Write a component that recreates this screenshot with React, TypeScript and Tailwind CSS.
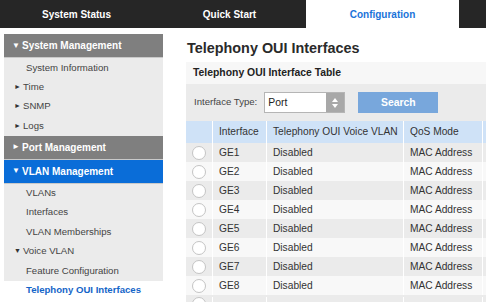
const tabs = ["System Status", "Quick Start", "Configuration"];

const rows = ["GE1", "GE2", "GE3", "GE4", "GE5", "GE6", "GE7", "GE8"];

function NavHeader({ label, open, active }: { label: string; open?: boolean; active?: boolean }) {
  return (
    <div
      className={`flex h-[24px] items-center border-b border-[#c9c9c9] pl-[8px] text-[10px] font-bold text-white ${
        active ? "bg-[#0a6dd8]" : "bg-[#7f7f7f]"
      }`}
    >
      <span className="mr-[3px] w-[7px] text-[8px]">{open ? "▼" : "►"}</span>
      {label}
    </div>
  );
}

function NavItem({ label, arrow, open, current }: { label: string; arrow?: boolean; open?: boolean; current?: boolean }) {
  return (
    <div
      className={`flex h-[19.4px] items-center text-[9.6px] ${
        current ? "bg-white text-[#1464c8] font-bold" : "bg-[#ebebeb] text-[#444]"
      } ${arrow ? "pl-[10px]" : "pl-[22px]"}`}
    >
      {arrow && <span className="mr-[3px] w-[6px] text-[7px] text-[#333]">{open ? "▼" : "►"}</span>}
      {label}
    </div>
  );
}

function Radio() {
  return <div className="h-[14px] w-[14px] rounded-full border border-[#c4c4c4] bg-white" />;
}

function Cells({ name, vlan, qos }: { name?: string; vlan?: string; qos?: string }) {
  return (
    <>
      <div className="flex h-full w-[54px] items-center border-l border-white pl-[6px]">{name}</div>
      <div className="flex h-full w-[137px] items-center border-l border-white pl-[6px]">{vlan}</div>
      <div className="flex h-full w-[79px] items-center border-l border-white pl-[6px]">{qos}</div>
      <div className="h-full flex-1 border-l border-white" />
    </>
  );
}

export default function App() {
  return (
    <div className="h-[302px] w-[486px] overflow-hidden bg-white" style={{ fontFamily: '"Liberation Sans", Arial, sans-serif' }}>
      <div className="flex h-[28px] bg-[#262626]">
        {tabs.map((t, i) => (
          <div
            key={t}
            className={`flex w-[153px] items-center justify-center text-[10px] font-bold ${
              i === 2 ? "bg-white text-[#1a73d9]" : "text-white"
            }`}
          >
            {t}
          </div>
        ))}
      </div>

      <div className="flex pt-[6px]">
        <div className="ml-[4px] w-[159px] shrink-0">
          <NavHeader label="System Management" open />
          <NavItem label="System Information" />
          <NavItem label="Time" arrow />
          <NavItem label="SNMP" arrow />
          <NavItem label="Logs" arrow />
          <NavHeader label="Port Management" />
          <NavHeader label="VLAN Management" open active />
          <NavItem label="VLANs" />
          <NavItem label="Interfaces" />
          <NavItem label="VLAN Memberships" />
          <NavItem label="Voice VLAN" arrow open />
          <NavItem label="Feature Configuration" />
          <NavItem label="Telephony OUI Interfaces" current />
        </div>

        <div className="ml-[23px] min-w-0 flex-1">
          <h1 className="ml-[1px] mt-[4px] flex h-[24px] items-center pb-[2px] text-[14.4px] font-bold text-[#2a2a2a]">
            Telephony OUI Interfaces
          </h1>
          <div className="w-[320px]">
            <div className="flex h-[22px] items-center bg-[#f7f7f7] pl-[7px] text-[10.4px] font-bold text-[#222]">
              Telephony OUI Interface Table
            </div>
            <div className="flex h-[37px] items-center bg-[#ebebeb] pl-[8px] text-[9.6px] text-[#444]">
              <span className="whitespace-nowrap">Interface Type:</span>
              <div className="ml-[7px] flex h-[21px] w-[81px] shrink-0 border border-[#b5b5b5] bg-white">
                <span className="flex flex-1 items-center pl-[3px] text-[10.4px] text-[#222]">Port</span>
                <div className="flex w-[18px] flex-col items-center justify-center gap-[2px] bg-[#a8a8a8]">
                  <svg width="6" height="4" viewBox="0 0 6 4"><path d="M3 0L6 4H0z" fill="#fff" /></svg>
                  <svg width="6" height="4" viewBox="0 0 6 4"><path d="M0 0h6L3 4z" fill="#fff" /></svg>
                </div>
              </div>
              <div className="ml-[13px] flex h-[21px] w-[80px] shrink-0 items-center justify-center bg-[#78a7dc] text-[10.4px] font-bold text-white">
                Search
              </div>
            </div>

            <div className="flex h-[22px] items-center bg-[#cfe2f7] text-[10.2px] text-[#333]">
              <div className="h-full w-[26px]" />
              <Cells name="Interface" vlan="Telephony OUI Voice VLAN" qos="QoS Mode" />
            </div>
            {rows.map((r, i) => (
              <div
                key={r}
                className={`flex h-[19px] items-center text-[10.2px] text-[#333] ${i % 2 === 0 ? "bg-[#ebebeb]" : "bg-[#f8f8f8]"}`}
              >
                <div className="flex h-full w-[26px] items-center justify-center">
                  <Radio />
                </div>
                <Cells name={r} vlan="Disabled" qos="MAC Address" />
              </div>
            ))}
            <div className="flex h-[19px] items-start bg-[#ebebeb] pt-[2px]">
              <div className="flex w-[26px] justify-center">
                <Radio />
              </div>
              <Cells />
            </div>
          </div>
        </div>
      </div>
    </div>
  );
}
